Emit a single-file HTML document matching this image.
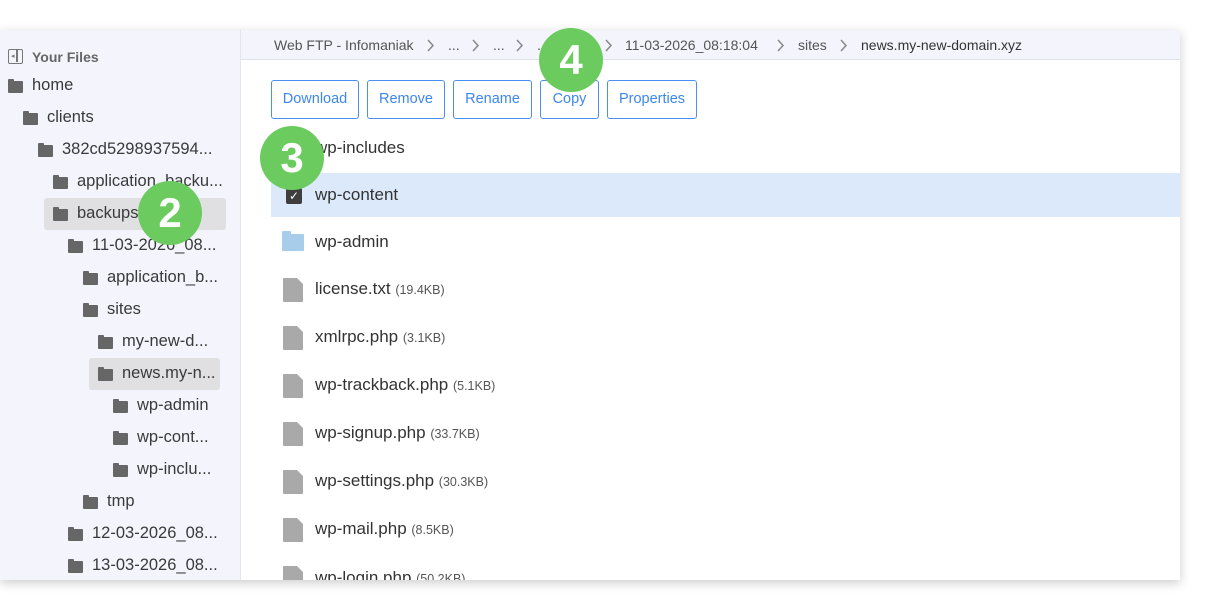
<!DOCTYPE html>
<html><head><meta charset="utf-8"><style>
*{margin:0;padding:0;box-sizing:border-box}
body{width:1210px;height:611px;background:#fff;position:relative;overflow:hidden;font-family:"Liberation Sans",sans-serif;}
.panel{position:absolute;left:0;top:30px;width:1180px;height:550px;background:#fff;box-shadow:0 3px 10px rgba(0,0,0,.2);overflow:hidden}
.side{position:absolute;left:0;top:0;width:241px;height:550px;background:#f3f4fc;border-right:1px solid #e4e5ee}
.top{position:absolute;left:241px;top:0;right:0;height:30px;background:#f3f4fc;border-bottom:1px solid #e0e1ea}
.t{position:absolute;font-size:16.5px;color:#3a3a3a;white-space:nowrap}
.fi{position:absolute;width:15px;height:12px;background:#666;border-radius:1px}
.fi:before{content:"";position:absolute;left:0;top:-2px;width:6px;height:3px;background:#666;border-radius:1px 1px 0 0}
.sel{position:absolute;background:#e0e0e3;border-radius:3px}
.bc{position:absolute;top:7px;font-size:14px;color:#555;white-space:nowrap}
.ch{position:absolute;top:9px;width:8px;height:13px}
.btn{position:absolute;height:39px;border:1px solid #4a8ff0;border-radius:3px;color:#3d87ec;font-size:14.5px;line-height:37px;text-align:center;background:#fff}
.row{position:absolute;left:315px;font-size:17px;color:#333;white-space:nowrap}
.row small{font-size:12.5px;color:#555}
.doc{position:absolute;left:283px;width:20px;height:24px;background:#a9a9a9;clip-path:polygon(0 0,70% 0,100% 25%,100% 100%,0 100%);border-radius:1px}
.badge{position:absolute;width:64px;height:64px;border-radius:50%;background:#6ccb5f;color:#fff;font-weight:bold;font-size:42px;text-align:center;line-height:64px}
</style></head><body>
<div class="panel">
<div class="side">
<div style="position:absolute;left:8px;top:19px;width:15px;height:15px;border:1.5px solid #777;border-radius:2px"><div style="position:absolute;left:7px;top:0;width:1.5px;height:12px;background:#777"></div><div style="position:absolute;left:2px;top:3px;font-size:7px;color:#777;line-height:7px">◂</div></div>
<div class="t" style="left:32px;top:19px;font-size:14px;font-weight:bold;color:#666">Your Files</div>
<div class="sel" style="left:44px;top:168px;width:182px;height:32px"></div>
<div class="sel" style="left:89px;top:328px;width:131px;height:32px"></div>
</div>
<div class="top">
<span class="bc" style="left:33px">Web FTP - Infomaniak</span>
<svg class="ch" style="left:186px"><path d="M1 1l5 5.5-5 5.5" fill="none" stroke="#888" stroke-width="1.5"/></svg>
<span class="bc" style="left:207px">...</span>
<svg class="ch" style="left:231px"><path d="M1 1l5 5.5-5 5.5" fill="none" stroke="#888" stroke-width="1.5"/></svg>
<span class="bc" style="left:252px">...</span>
<svg class="ch" style="left:275px"><path d="M1 1l5 5.5-5 5.5" fill="none" stroke="#888" stroke-width="1.5"/></svg>
<span class="bc" style="left:296px">...</span>
<svg class="ch" style="left:364px"><path d="M1 1l5 5.5-5 5.5" fill="none" stroke="#888" stroke-width="1.5"/></svg>
<span class="bc" style="left:384px">11-03-2026_08:18:04</span>
<svg class="ch" style="left:536px"><path d="M1 1l5 5.5-5 5.5" fill="none" stroke="#888" stroke-width="1.5"/></svg>
<span class="bc" style="left:557px">sites</span>
<svg class="ch" style="left:599px"><path d="M1 1l5 5.5-5 5.5" fill="none" stroke="#888" stroke-width="1.5"/></svg>
<span class="bc" style="left:620px;color:#333">news.my-new-domain.xyz</span>
</div>
<div class="doc" style="top:536px"></div><div class="row" style="top:538px">wp-login.php <small>(50.2KB)</small></div>
</div>
<!-- tree -->
<div class="fi" style="left:8px;top:81px"></div><div class="t" style="left:32px;top:76px">home</div>
<div class="fi" style="left:23px;top:113px"></div><div class="t" style="left:47px;top:108px">clients</div>
<div class="fi" style="left:38px;top:145px"></div><div class="t" style="left:62px;top:140px">382cd5298937594...</div>
<div class="fi" style="left:53px;top:177px"></div><div class="t" style="left:77px;top:172px">application_backu...</div>
<div class="fi" style="left:53px;top:209px"></div><div class="t" style="left:77px;top:204px">backups</div>
<div class="fi" style="left:68px;top:241px"></div><div class="t" style="left:92px;top:236px">11-03-2026_08...</div>
<div class="fi" style="left:83px;top:273px"></div><div class="t" style="left:107px;top:268px">application_b...</div>
<div class="fi" style="left:83px;top:305px"></div><div class="t" style="left:107px;top:300px">sites</div>
<div class="fi" style="left:98px;top:337px"></div><div class="t" style="left:122px;top:332px">my-new-d...</div>
<div class="fi" style="left:98px;top:369px"></div><div class="t" style="left:122px;top:364px">news.my-n...</div>
<div class="fi" style="left:113px;top:401px"></div><div class="t" style="left:137px;top:396px">wp-admin</div>
<div class="fi" style="left:113px;top:433px"></div><div class="t" style="left:137px;top:428px">wp-cont...</div>
<div class="fi" style="left:113px;top:465px"></div><div class="t" style="left:137px;top:460px">wp-inclu...</div>
<div class="fi" style="left:83px;top:497px"></div><div class="t" style="left:107px;top:492px">tmp</div>
<div class="fi" style="left:68px;top:529px"></div><div class="t" style="left:92px;top:524px">12-03-2026_08...</div>
<div class="fi" style="left:68px;top:561px"></div><div class="t" style="left:92px;top:556px">13-03-2026_08...</div>
<!-- content -->
<div class="btn" style="left:271px;width:88px;top:80px">Download</div>
<div class="btn" style="left:367px;width:78px;top:80px">Remove</div>
<div class="btn" style="left:453px;width:79px;top:80px">Rename</div>
<div class="btn" style="left:540px;width:59px;top:80px">Copy</div>
<div class="btn" style="left:607px;width:90px;top:80px">Properties</div>
<div style="position:absolute;left:271px;top:173px;width:909px;height:44px;background:#dce9fb"></div>
<div class="row" style="top:138px">wp-includes</div>
<div style="position:absolute;left:286px;top:188px;width:16px;height:16px;background:#3e3e3e;border-radius:2px;color:#fff;font-size:12px;line-height:16px;text-align:center">✓</div>
<div class="row" style="top:185px">wp-content</div>
<div style="position:absolute;left:282px;top:234px;width:22px;height:17px;background:#a7cdea;border-radius:1px"></div>
<div style="position:absolute;left:282px;top:231px;width:9px;height:4px;background:#a7cdea;border-radius:1px 1px 0 0"></div>
<div class="row" style="top:232px">wp-admin</div>
<div class="doc" style="top:278px"></div><div class="row" style="top:279px">license.txt <small>(19.4KB)</small></div>
<div class="doc" style="top:326px"></div><div class="row" style="top:327px">xmlrpc.php <small>(3.1KB)</small></div>
<div class="doc" style="top:374px"></div><div class="row" style="top:375px">wp-trackback.php <small>(5.1KB)</small></div>
<div class="doc" style="top:422px"></div><div class="row" style="top:423px">wp-signup.php <small>(33.7KB)</small></div>
<div class="doc" style="top:470px"></div><div class="row" style="top:471px">wp-settings.php <small>(30.3KB)</small></div>
<div class="doc" style="top:518px"></div><div class="row" style="top:519px">wp-mail.php <small>(8.5KB)</small></div>
<div class="badge" style="left:138px;top:181px">2</div>
<div class="badge" style="left:260px;top:126px">3</div>
<div class="badge" style="left:539px;top:28px">4</div>
</body></html>
